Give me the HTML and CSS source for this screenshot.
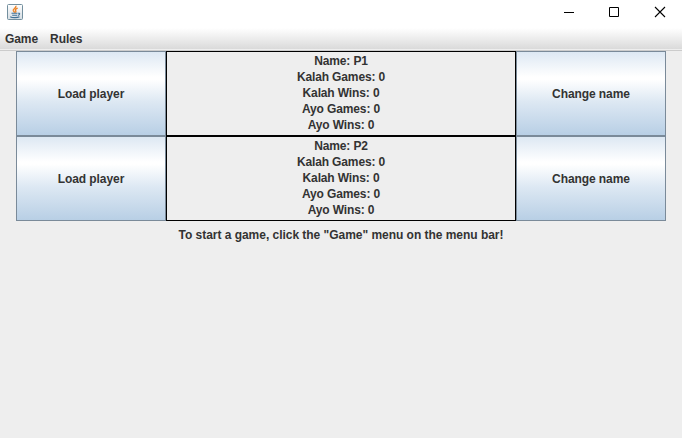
FILE: index.html
```html
<!DOCTYPE html>
<html lang="en">
<head>
<meta charset="utf-8">
<title>Mancala</title>
<link rel="stylesheet" href="styles.css">
</head>
<body>
<header class="titlebar">
  <svg class="app-icon" width="16" height="16" viewBox="0 0 16 16" aria-hidden="true">
    <defs><linearGradient id="tile" x1="0" y1="0" x2="0" y2="1"><stop offset="0" stop-color="#fff"/><stop offset="1" stop-color="#d5dde3"/></linearGradient></defs>
    <rect x=".5" y=".5" width="15" height="15" rx="1" fill="url(#tile)" stroke="#738f9e"/>
    <path d="M8.900 1.800C9.800 4 5.600 4.800 6.300 6.600L7.700 8.600M10.700 4.200C8.200 5.200 8 6 8.900 7.200L8.500 8.600" fill="none" stroke="#ee8425" stroke-width="1.400"/>
    <path d="M4.500 9.300H10.500M5.200 11.200H10M11 9.300C13.500 8.800 13 11 10.800 11.400M3.300 12.700C5 14 10.500 13.900 12.500 12.800" fill="none" stroke="#3f7196" stroke-width="1.100"/>
  </svg>
  <div class="controls">
    <svg width="46" height="24" viewBox="0 0 46 24" aria-label="Minimize"><path d="M18 12.500H28" stroke="#000"/></svg>
    <svg width="45" height="24" viewBox="0 0 45 24" aria-label="Maximize"><path d="M17.500 7.500H26.500V16.500H17.500Z" fill="none" stroke="#000"/></svg>
    <svg width="46" height="24" viewBox="0 0 46 24" aria-label="Close"><path d="M18 7L28 17M28 7L18 17" stroke="#000" stroke-width="1.100"/></svg>
  </div>
</header>
<nav class="menubar"><span>Game</span><span>Rules</span></nav>
<main>
  <section class="player">
    <button>Load player</button>
    <div class="stats"><p>Name: P1</p><p>Kalah Games: 0</p><p>Kalah Wins: 0</p><p>Ayo Games: 0</p><p>Ayo Wins: 0</p></div>
    <button>Change name</button>
  </section>
  <section class="player">
    <button>Load player</button>
    <div class="stats"><p>Name: P2</p><p>Kalah Games: 0</p><p>Kalah Wins: 0</p><p>Ayo Games: 0</p><p>Ayo Wins: 0</p></div>
    <button>Change name</button>
  </section>
  <p class="hint">To start a game, click the "Game" menu on the menu bar!</p>
</main>
</body>
</html>
```
FILE: styles.css
```css
* { box-sizing: border-box; }
body {
  margin: 0;
  height: 438px;
  overflow: hidden;
  background: #eee;
  color: #333;
  font: bold 12px/16px "Liberation Sans", Arial, sans-serif;
}
p { margin: 0; }
.titlebar {
  display: flex;
  justify-content: space-between;
  height: 28px;
  padding-left: 7px;
  background: #fff;
}
.app-icon { margin-top: 4px; }
.controls { display: flex; margin-right: -1px; }
.menubar {
  display: flex;
  gap: 12px;
  height: 23px;
  padding: 3px 5px 0;
  border-bottom: 1px solid #ccc;
  background: linear-gradient(#fff, #dadada 21px, #eee 21px);
  letter-spacing: -0.08px;
}
main { width: 650px; margin: 0 auto; }
.player {
  display: grid;
  grid-template-columns: 150px 350px 150px;
  height: 85px;
}
.player button {
  padding: 0;
  border: 1px solid #7a8a99;
  border-radius: 0;
  background: linear-gradient(#dde8f3, #fff 30%, #fff 33%, #dde8f3 60%, #b8cfe5);
  color: #333;
  font: inherit;
  letter-spacing: -0.08px;
}
.stats {
  padding-top: 1px;
  border: 1px solid #000;
  text-align: center;
  letter-spacing: -0.13px;
}
.hint { margin-top: 6px; text-align: center; letter-spacing: -0.03px; }
```
